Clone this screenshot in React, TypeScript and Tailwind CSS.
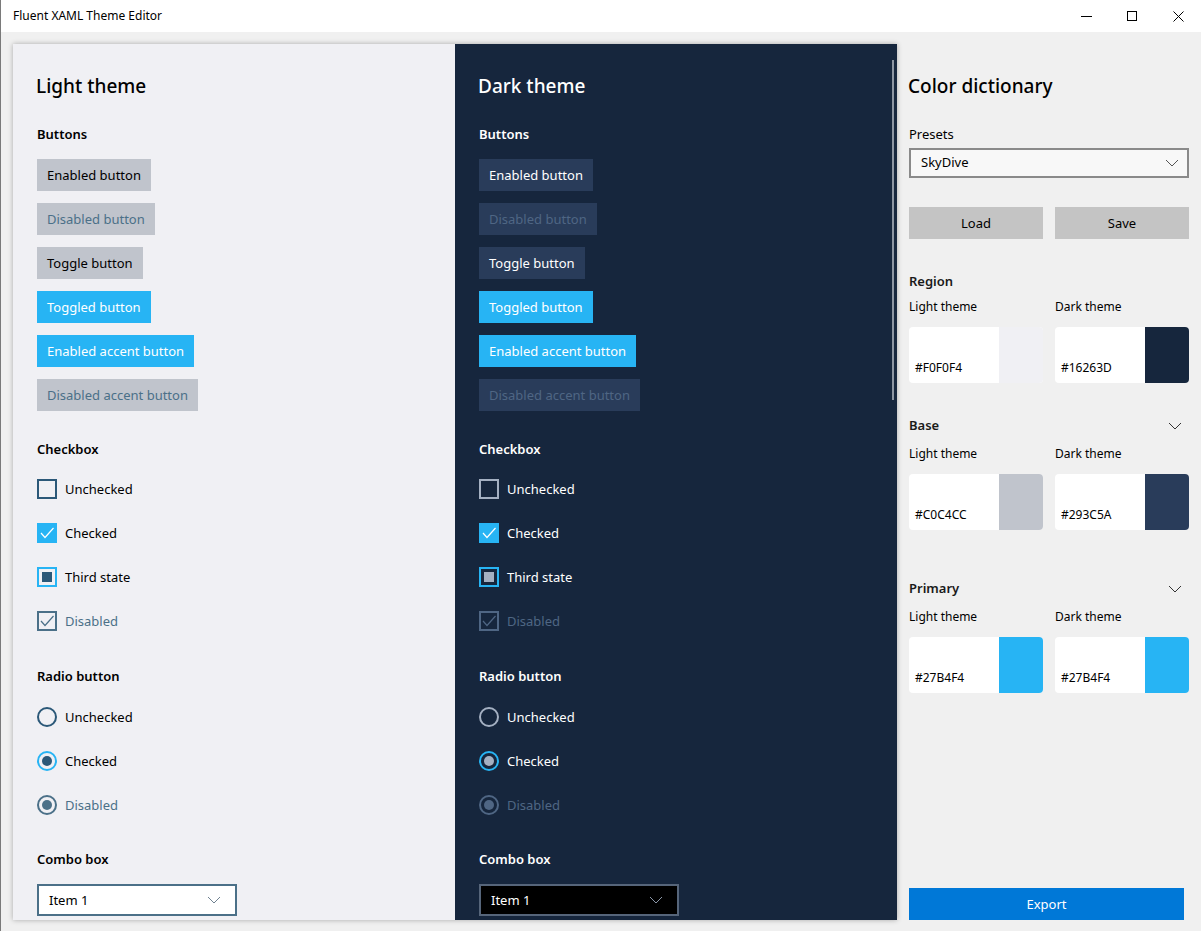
import React from 'react';

const Chevron = ({ className }: { className: string }) => (
    <svg width="14" height="8" viewBox="0 0 14 8" className={className}>
        <polyline points="1,1 7,7 13,1" fill="none" stroke="currentColor" strokeWidth="1" />
    </svg>
);

const Check = ({ color }: { color: string }) => (
    <svg width="16" height="16" viewBox="0 0 16 16">
        <polyline points="2,8 6,12.5 14.5,3" fill="none" stroke={color} strokeWidth="1.2" />
    </svg>
);

const Btn = ({ label, cls }: { label: string; cls: string }) => (
    <div className={`h-8 px-[10px] pt-px flex items-center w-fit text-[13px] ${cls}`}>{label}</div>
);

const Heading = ({ children, cls }: { children: React.ReactNode; cls: string }) => (
    <div className={`h-5 pt-px flex items-center text-[13px] font-semibold ${cls}`}>{children}</div>
);

const Row = ({ children, label, cls }: { children: React.ReactNode; label: string; cls: string }) => (
    <div className="h-8 flex items-center gap-2">
        {children}
        <span className={`text-[13px] pt-px ${cls}`}>{label}</span>
    </div>
);

const ThemePanel = ({ dark }: { dark: boolean }) => {
    const text = dark ? 'text-white' : 'text-black';
    const dim = dark ? 'text-[#4f6684]' : 'text-[#4b7088]';
    const btn = dark ? 'bg-[#293c5a] text-white' : 'bg-[#c0c4cc] text-black';
    const btnOff = dark ? 'bg-[#293c5a] text-[#4f6684]' : 'bg-[#c0c4cc] text-[#4b7088]';
    const line = dark ? 'border-[#a4b0c2]' : 'border-[#2b5878]';
    const lineOff = dark ? 'border-[#4f6684]' : 'border-[#4b7088]';
    const fill = dark ? 'bg-[#a4b0c2]' : 'bg-[#2b5878]';
    const fillOff = dark ? 'bg-[#4f6684]' : 'bg-[#4b7088]';

    return (
        <div className={`w-[442px] h-full pl-6 pt-[28px] ${dark ? 'bg-[#16263d]' : 'bg-[#f0f0f4]'}`}>
            <div className={`h-7 flex items-center -ml-px text-[19px] font-medium ${text}`}>
                {dark ? 'Dark theme' : 'Light theme'}
            </div>

            <Heading cls={`mt-6 ${text}`}>Buttons</Heading>
            <div className="mt-[15px] flex flex-col gap-3">
                <Btn label="Enabled button" cls={btn} />
                <Btn label="Disabled button" cls={btnOff} />
                <Btn label="Toggle button" cls={btn} />
                <Btn label="Toggled button" cls="bg-[#27b4f4] text-white" />
                <Btn label="Enabled accent button" cls="bg-[#27b4f4] text-white" />
                <Btn label="Disabled accent button" cls={btnOff} />
            </div>

            {/* Checkbox */}
            <Heading cls={`mt-[28px] ${text}`}>Checkbox</Heading>
            <div className="mt-[14px] flex flex-col gap-3">
                <Row label="Unchecked" cls={text}>
                    <div className={`w-5 h-5 border-2 ${line}`} />
                </Row>
                <Row label="Checked" cls={text}>
                    <div className="w-5 h-5 bg-[#27b4f4] flex items-center justify-center">
                        <Check color="#ffffff" />
                    </div>
                </Row>
                <Row label="Third state" cls={text}>
                    <div className="w-5 h-5 border-2 border-[#27b4f4] flex items-center justify-center">
                        <div className={`w-[10px] h-[10px] ${fill}`} />
                    </div>
                </Row>
                <Row label="Disabled" cls={dim}>
                    <div className={`w-5 h-5 border-2 ${lineOff} flex items-center justify-center`}>
                        <Check color={dark ? '#4f6684' : '#4b7088'} />
                    </div>
                </Row>
            </div>

            {/* Radio button */}
            <Heading cls={`mt-[29px] ${text}`}>Radio button</Heading>
            <div className="mt-[15px] flex flex-col gap-3">
                <Row label="Unchecked" cls={text}>
                    <div className={`w-5 h-5 rounded-full border-2 ${line}`} />
                </Row>
                <Row label="Checked" cls={text}>
                    <div className="w-5 h-5 rounded-full border-2 border-[#27b4f4] flex items-center justify-center">
                        <div className={`w-[10px] h-[10px] rounded-full ${fill}`} />
                    </div>
                </Row>
                <Row label="Disabled" cls={dim}>
                    <div className={`w-5 h-5 rounded-full border-2 ${lineOff} flex items-center justify-center`}>
                        <div className={`w-[10px] h-[10px] rounded-full ${fillOff}`} />
                    </div>
                </Row>
            </div>

            <Heading cls={`mt-[28px] ${text}`}>Combo box</Heading>
            <div
                className={`mt-[15px] w-[200px] h-8 border-2 flex items-center justify-between pl-[10px] pr-[14px] text-[13px] ${
                    dark ? 'bg-black border-[#56657a] text-white' : 'bg-white border-[#4b7088] text-black'
                }`}
            >
                <span className="pt-px">Item 1</span>
                <Chevron className={dark ? 'text-[#8a96a8]' : 'text-[#6f8190]'} />
            </div>
        </div>
    );
};

const ColorCard = ({ hex, swatch }: { hex: string; swatch: string }) => (
    <div className="w-[134px] h-[56px] bg-white rounded-[4px] flex overflow-hidden">
        <div className="flex-1 flex items-end pl-[6px] pb-[6px] text-[12px] text-black">{hex}</div>
        <div className={`w-[44px] h-full ${swatch}`} />
    </div>
);

const ColorGroup = ({ title, light, dark, lightCls, darkCls, chevron, cls, labelCls }: {
    title: string; light: string; dark: string; lightCls: string; darkCls: string; chevron: boolean; cls: string; labelCls: string;
}) => (
    <div className={cls}>
        <div className="h-5 flex items-center justify-between pr-[7px]">
            <span className="text-[13px] font-semibold text-[#1a1a1a]">{title}</span>
            {chevron && <Chevron className="text-[#333333]" />}
        </div>
        <div className={`flex gap-3 ${labelCls}`}>
            <div>
                <div className="h-4 flex items-center text-[12px] text-black">Light theme</div>
                <div className="mt-[12px]"><ColorCard hex={light} swatch={lightCls} /></div>
            </div>
            <div>
                <div className="h-4 flex items-center text-[12px] text-black">Dark theme</div>
                <div className="mt-[12px]"><ColorCard hex={dark} swatch={darkCls} /></div>
            </div>
        </div>
    </div>
);

export default function App() {
    return (
        <div className="w-[1201px] h-[931px] flex flex-col bg-[#f0f0f0] border-l border-[#7a7a7a] font-['Segoe_UI','Noto_Sans',sans-serif] overflow-hidden">
            {/* Title bar */}
            <div className="h-8 bg-white flex items-center justify-between shrink-0">
                <span className="pl-3 text-[12px] text-black">Fluent XAML Theme Editor</span>
                <div className="flex h-full">
                    <div className="w-[46px] h-full flex items-center justify-center">
                        <div className="w-[11px] h-px bg-black" />
                    </div>
                    <div className="w-[46px] h-full flex items-center justify-center">
                        <div className="w-[10px] h-[10px] border border-black" />
                    </div>
                    <div className="w-[46px] h-full flex items-center justify-center">
                        <svg width="11" height="11" viewBox="0 0 11 11">
                            <path d="M0.5 0.5 L10.5 10.5 M10.5 0.5 L0.5 10.5" stroke="#000" strokeWidth="1" />
                        </svg>
                    </div>
                </div>
            </div>

            <div className="flex flex-1 pt-3 pl-3">
                {/* Preview card */}
                <div className="relative w-[884px] h-[876px] flex shadow-[0_0_5px_rgba(0,0,0,0.3)]">
                    <ThemePanel dark={false} />
                    <ThemePanel dark={true} />
                    <div className="absolute right-[3px] top-[16px] w-[2px] h-[340px] bg-[#8d96a3]" />
                </div>

                {/* Color dictionary */}
                <div className="flex-1 pl-[11px] pr-[12px] pt-[28px] flex flex-col">
                    <div className="h-7 flex items-center text-[19px] font-medium text-black">Color dictionary</div>
                    <div className="mt-6 h-5 pt-px flex items-center text-[13px] text-black pl-px">Presets</div>
                    <div className="mt-[4px] ml-px h-[30px] border-2 border-[#8a8a8a] bg-[#f8f8f8] flex items-center justify-between pl-[10px] pr-[8px] text-[13px] text-black">
                        <span>SkyDive</span>
                        <Chevron className="text-[#555555]" />
                    </div>
                    <div className="mt-[29px] ml-px flex gap-3">
                        <div className="flex-1 h-8 pt-px bg-[#c4c4c4] flex items-center justify-center text-[13px] text-black">Load</div>
                        <div className="flex-1 h-8 pt-px bg-[#c4c4c4] flex items-center justify-center text-[13px] text-black">Save</div>
                    </div>

                    <div className="ml-px">
                        <ColorGroup cls="mt-[33px]" labelCls="mt-[7px]" title="Region" light="#F0F0F4" dark="#16263D" lightCls="bg-[#f0f0f4]" darkCls="bg-[#16263d]" chevron={false} />
                        <ColorGroup cls="mt-[33px]" labelCls="mt-[10px]" title="Base" light="#C0C4CC" dark="#293C5A" lightCls="bg-[#c0c4cc]" darkCls="bg-[#293c5a]" chevron={true} />
                        <ColorGroup cls="mt-[49px]" labelCls="mt-[10px]" title="Primary" light="#27B4F4" dark="#27B4F4" lightCls="bg-[#27b4f4]" darkCls="bg-[#27b4f4]" chevron={true} />
                    </div>

                    <div className="mt-auto mb-[11px] ml-px mr-[5px] h-8 pt-px bg-[#0078d7] flex items-center justify-center text-[13px] text-white">Export</div>
                </div>
            </div>
        </div>
    );
}
